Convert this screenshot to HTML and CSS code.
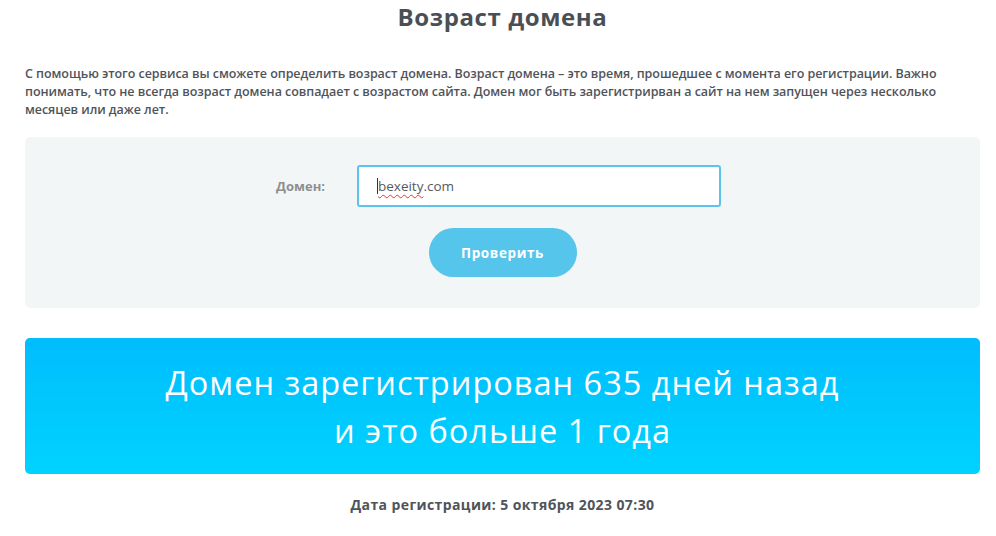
FILE: index.html
```html
<!DOCTYPE html>
<html lang="ru">
<head>
<meta charset="utf-8">
<title>Возраст домена</title>
<link rel="stylesheet" href="styles.css">
</head>
<body>
<main class="page">
  <h1 class="title">Возраст домена</h1>
  <p class="intro">С помощью этого сервиса вы сможете определить возраст домена. Возраст домена – это время, прошедшее с момента его регистрации. Важно понимать, что не всегда возраст домена совпадает с возрастом сайта. Домен мог быть зарегистрирван а сайт на нем запущен через несколько месяцев или даже лет.</p>
  <form class="check-form">
    <div class="form-row">
      <label class="form-label" for="domain">Домен:</label>
      <div class="input"><span class="caret"></span><span class="typo">bexeity</span>.com</div>
    </div>
    <button class="btn" type="button">Проверить</button>
  </form>
  <section class="result">
    <p class="result-text">Домен зарегистрирован 635 дней назад<br>и это больше 1 года</p>
  </section>
  <p class="reg-date">Дата регистрации: 5 октября 2023 07:30</p>
</main>
</body>
</html>
```
FILE: styles.css
```css
* { box-sizing: border-box; }
html, body { margin: 0; padding: 0; background: #fff; }
body {
  font-family: "Open Sans", "DejaVu Sans", sans-serif;
  color: #4a4f56;
}
.page {
  padding: 0 16px 0 25px;
}
.title {
  margin: 0;
  text-align: center;
  font-size: 24px;
  line-height: 34px;
  font-weight: 700;
  color: #4a4f56;
  letter-spacing: 0.6px;
}
.intro {
  margin: 31px 0 18px;
  font-size: 12.5px;
  line-height: 18px;
  font-weight: 600;
  color: #4f545a;
  letter-spacing: -0.05px;
}
.check-form {
  background: #f3f6f7;
  border-radius: 5px;
  padding: 28px 0 31px;
  display: flex;
  flex-direction: column;
  align-items: center;
  gap: 21px;
}
.form-row {
  display: flex;
  align-items: center;
  gap: 32px;
  margin-left: -8px;
}
.form-label {
  font-size: 13px;
  font-weight: 700;
  color: #8d8f91;
}
.input {
  width: 364px;
  height: 42px;
  border: 2px solid #5cc3ec;
  border-radius: 3px;
  background: #fff;
  display: flex;
  align-items: center;
  padding-left: 18px;
  font-size: 13.5px;
  color: #555a60;
}
.caret {
  display: inline-block;
  width: 1px;
  height: 16px;
  background: #333;
}
.typo {
  text-decoration: underline wavy #e33;
  text-decoration-thickness: 1px;
  text-underline-offset: 3px;
}
.btn {
  width: 148px;
  height: 49px;
  border: none;
  border-radius: 25px;
  background: #56c5ec;
  color: #fff;
  font-family: inherit;
  font-size: 13.5px;
  font-weight: 700;
  letter-spacing: 0.6px;
}
.result {
  margin-top: 30px;
  border-radius: 5px;
  background: linear-gradient(to bottom, #00bdfe, #00d3ff);
  padding: 21px 0 19px;
}
.result-text {
  margin: 0;
  text-align: center;
  color: #fff;
  font-size: 32.5px;
  line-height: 48px;
  font-weight: 400;
  letter-spacing: 1px;
}
.reg-date {
  margin: 22px 0 0;
  text-align: center;
  font-size: 14px;
  line-height: 18px;
  font-weight: 700;
  color: #4f545a;
  letter-spacing: 0.4px;
}
```
